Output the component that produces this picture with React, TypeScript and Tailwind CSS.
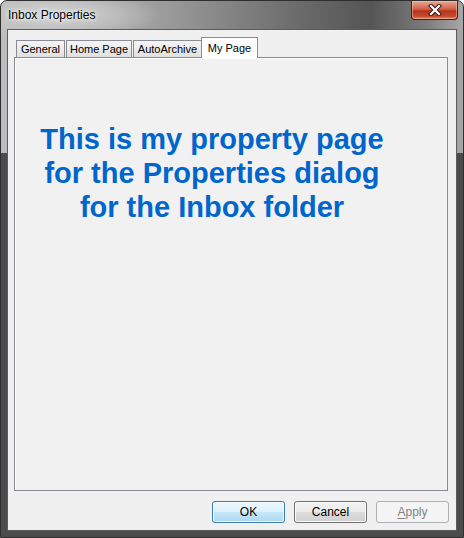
import React from 'react';

const ui = { fontFamily: '"Liberation Sans", Arial, sans-serif' };

const tabs = [
  { label: 'General', w: 'w-[49px]' },
  { label: 'Home Page', w: 'w-[66px]' },
  { label: 'AutoArchive', w: 'w-[69px]' },
];

function CloseGlyph() {
  return (
    <svg width="14" height="12" viewBox="0 0 14 12">
      <path d="M3 2 L11 10 M11 2 L3 10" stroke="#3b1a14" strokeWidth="4.2" strokeLinecap="square" />
      <path d="M3 2 L11 10 M11 2 L3 10" stroke="#ffffff" strokeWidth="2.2" strokeLinecap="square" />
    </svg>
  );
}

export default function App() {
  return (
    <div
      className="w-[464px] h-[538px] rounded-t-[7px] border border-[#2e2e2e] flex flex-col overflow-hidden bg-[radial-gradient(ellipse_110px_26px_at_50px_14px,#d4d4d4_0%,#c4c4c4_45%,transparent_100%),linear-gradient(to_bottom,transparent_0px,transparent_152px,#4b4b4b_152px,#4b4b4b_100%),linear-gradient(to_right,#bdbdbd_0%,#9c9c9c_35%,#6a6a6a_65%,#555555_80%,#7c7c7c_92%,#a8a8a8_100%)]"
      style={ui}
    >
      {/* title bar */}
      <div className="h-[28px] flex items-start justify-between shrink-0">
        <span className="pl-[7px] pt-[7px] text-[12px] leading-[14px] text-black [text-shadow:0_0_6px_#ffffff,0_0_3px_#ffffff]">
          Inbox Properties
        </span>
        <button className="mr-[5px] w-[47px] h-[19px] rounded-b-[4px] border border-t-0 border-[#4d1a12] flex items-center justify-center bg-[linear-gradient(to_bottom,#e9a894_0%,#d2624a_45%,#b8321c_55%,#c84a2e_85%,#e08a6c_100%)] shadow-[inset_0_0_0_1px_rgba(255,210,190,0.45)]">
          <CloseGlyph />
        </button>
      </div>

      {/* client area */}
      <div className="mx-[6px] h-[502px] border border-[#5c5c5c] bg-[#f0f0f0] flex flex-col">
        <div className="pl-[6px] pt-[7px]">
          <div className="flex items-end h-[20px] pl-[2px]">
            {tabs.map((t) => (
              <div
                key={t.label}
                className={`${t.w} h-[17px] mr-px border border-b-0 border-[#898c95] bg-[linear-gradient(to_bottom,#f4f4f4,#ebebeb_50%,#e0e0e0)] flex items-center justify-center text-[11px] text-black`}
              >
                {t.label}
              </div>
            ))}
            <div className="relative z-10 -ml-[2px] -mb-px w-[57px] h-[21px] border border-b-0 border-[#898c95] bg-white flex items-start justify-center pt-[2px] text-[11px] text-black">
              My Page
            </div>
          </div>
          <div className="w-[434px] h-[434px] border border-[#898c95] bg-[#f1f1f1] shadow-[inset_1px_1px_0_#ffffff]">
            <div className="w-[394px] pt-[64px] text-center text-[29px] leading-[34px] font-bold text-[#0066cc]">
              <div>This is my property page</div>
              <div>for the Properties dialog</div>
              <div>for the Inbox folder</div>
            </div>
          </div>
        </div>

        <div className="flex justify-end gap-[9px] pr-[7px] pt-[10px]">
          <button className="w-[73px] h-[22px] rounded-[3px] border border-[#3c7fb1] text-[12px] text-black bg-[linear-gradient(to_bottom,#ecf7fd_0%,#dcf1fc_50%,#c4e6f8_51%,#aed8f0_100%)] shadow-[inset_0_0_0_1px_#f2fbff]">
            OK
          </button>
          <button className="w-[73px] h-[22px] rounded-[3px] border border-[#707070] text-[12px] text-black bg-[linear-gradient(to_bottom,#f2f2f2_0%,#ebebeb_50%,#dddddd_51%,#cfcfcf_100%)] shadow-[inset_0_0_0_1px_#fbfbfb]">
            Cancel
          </button>
          <button className="w-[73px] h-[22px] rounded-[3px] border border-[#adb2b5] text-[12px] text-[#838383] bg-[#f4f4f4]">
            <span className="underline underline-offset-2">A</span>pply
          </button>
        </div>
      </div>
    </div>
  );
}
